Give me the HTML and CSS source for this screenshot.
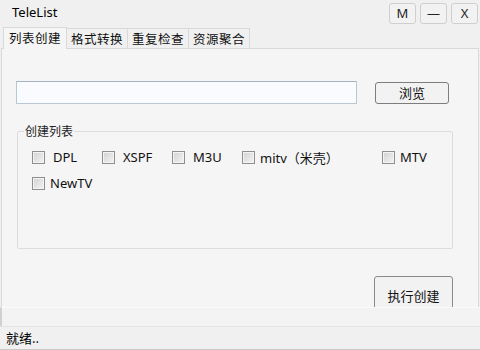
FILE: index.html
```html
<!DOCTYPE html>
<html lang="zh-CN">
<head>
<meta charset="utf-8">
<title>TeleList</title>
<link rel="stylesheet" href="styles.css">
</head>
<body>
<div class="window">
  <div class="titlebar">
    <span class="title">TeleList</span>
    <div class="winbtns">
      <button class="winbtn">M</button>
      <button class="winbtn">—</button>
      <button class="winbtn">X</button>
    </div>
  </div>
  <div class="tabs">
    <div class="tab active">列表创建</div>
    <div class="tab">格式转换</div>
    <div class="tab">重复检查</div>
    <div class="tab">资源聚合</div>
  </div>
  <div class="pane">
    <div class="inputrow">
      <div class="pathinput"></div>
      <button class="btn browse">浏览</button>
    </div>
    <fieldset class="group">
      <legend class="legend">创建列表</legend>
      <div class="checks">
        <label class="check"><span class="box"></span><span class="lbl wide">DPL</span></label>
        <label class="check"><span class="box"></span><span class="lbl wide">XSPF</span></label>
        <label class="check"><span class="box"></span><span class="lbl wide">M3U</span></label>
        <label class="check span2"><span class="box"></span><span class="lbl">mitv（米壳）</span></label>
        <label class="check"><span class="box"></span><span class="lbl">MTV</span></label>
        <label class="check"><span class="box"></span><span class="lbl">NewTV</span></label>
      </div>
    </fieldset>
    <button class="btn exec">执行创建</button>
  </div>
  <div class="gap"></div>
  <div class="status">就绪..</div>
</div>
</body>
</html>
```
FILE: styles.css
```css
* { box-sizing: border-box; }
html, body { margin: 0; padding: 0; }
body {
  background: #f0f0f0;
  font-family: "Noto Sans", "Noto Sans CJK SC", sans-serif;
  font-size: 12px;
  color: #000;
}
.window {
  width: 480px;
  height: 350px;
  display: flex;
  flex-direction: column;
  overflow: hidden;
}
.titlebar {
  height: 26px;
  display: flex;
  align-items: center;
  justify-content: space-between;
  padding: 0 2px 0 12px;
}
.title { font-size: 13px; line-height: 16px; margin-top: -2px; }
.winbtns { display: flex; gap: 4px; align-self: flex-start; padding-top: 3px; }
.winbtn {
  width: 27px;
  height: 21px;
  padding: 0;
  border: 1px solid #cfcfcf;
  border-radius: 3px;
  background: #f2f2f2;
  font-family: "Noto Sans", sans-serif;
  font-size: 13px;
  color: #222;
  line-height: 19px;
}
.tabs {
  height: 22px;
  display: flex;
  align-items: flex-end;
  padding-left: 3px;
}
.tab {
  height: 20px;
  padding: 0;
  border: 1px solid #d9d9d9;
  border-bottom: none;
  border-left: none;
  background: #f0f0f0;
  font-family: "Noto Sans CJK SC", sans-serif;
  font-size: 12.5px;
  letter-spacing: 0.5px;
  line-height: 19px;
  color: #111;
  width: 61px;
  text-align: center;
  white-space: nowrap;
}
.tab.active {
  height: 22px;
  width: 64px;
  border-left: 1px solid #d9d9d9;
  background: #f5f5f5;
  line-height: 20px;
  margin-bottom: -1px;
  position: relative;
  z-index: 1;
}
.pane {
  height: 259px;
  margin: 0 1px 0 1px;
  border: 1px solid #d9d9d9;
  border-bottom: none;
  background: #f5f5f5;
  overflow: hidden;
  padding: 32px 0 0 14px;
}
.inputrow { display: flex; align-items: center; gap: 18px; }
.pathinput {
  width: 341px;
  height: 23px;
  border: 1px solid #b9c6d4;
  border-top-color: #a7b3c0;
  background: #f9fbfe;
}
.btn {
  border: 1px solid #7d7d7d;
  border-radius: 3px;
  background: #f2f2f2;
  font-family: "Noto Sans CJK SC", sans-serif;
  font-size: 13px;
  color: #111;
  padding: 0;
}
.browse { width: 74px; height: 22px; line-height: 20px; }
.group {
  margin: 19px 0 0 1px;
  width: 435px;
  height: 126px;
  border: 1px solid #dcdcdc;
  border-radius: 2px;
  padding: 0 0 0 6px;
}
.legend {
  padding: 0 1px;
  font-family: "Noto Sans CJK SC", sans-serif;
  font-size: 12px;
  line-height: 16px;
  color: #222;
}
.checks {
  margin: 5px 0 0 8px;
  display: grid;
  grid-template-columns: repeat(6, 70px);
  grid-auto-rows: 26px;
}
.check { display: flex; align-items: center; gap: 5px; font-size: 13px; color: #111; white-space: nowrap; }
.span2 { grid-column: span 2; }
.box {
  width: 13px;
  height: 13px;
  border: 1px solid #8f8f8f;
  background: linear-gradient(135deg, #d2d2d2, #f4f4f4);
  box-shadow: inset 0 0 0 1px #f4f4f4;
  flex: none;
}
.lbl.wide { margin-left: 3px; }
.exec {
  display: block;
  width: 79px;
  height: 40px;
  margin: 27px 0 0 358px;
  border-color: #8a8a8a;
  line-height: 18px;
}
.gap {
  height: 19px;
  border-top: 1px solid #fafafa;
  border-left: 2px solid #d0d0d0;
  background: #f3f3f3;
}
.status {
  flex: 1;
  border-top: 1px solid #e4e4e4;
  border-bottom: 1px solid #c8c8c8;
  padding-left: 6px;
  font-family: "Noto Sans CJK SC", sans-serif;
  font-size: 13px;
  line-height: 22px;
}
```
